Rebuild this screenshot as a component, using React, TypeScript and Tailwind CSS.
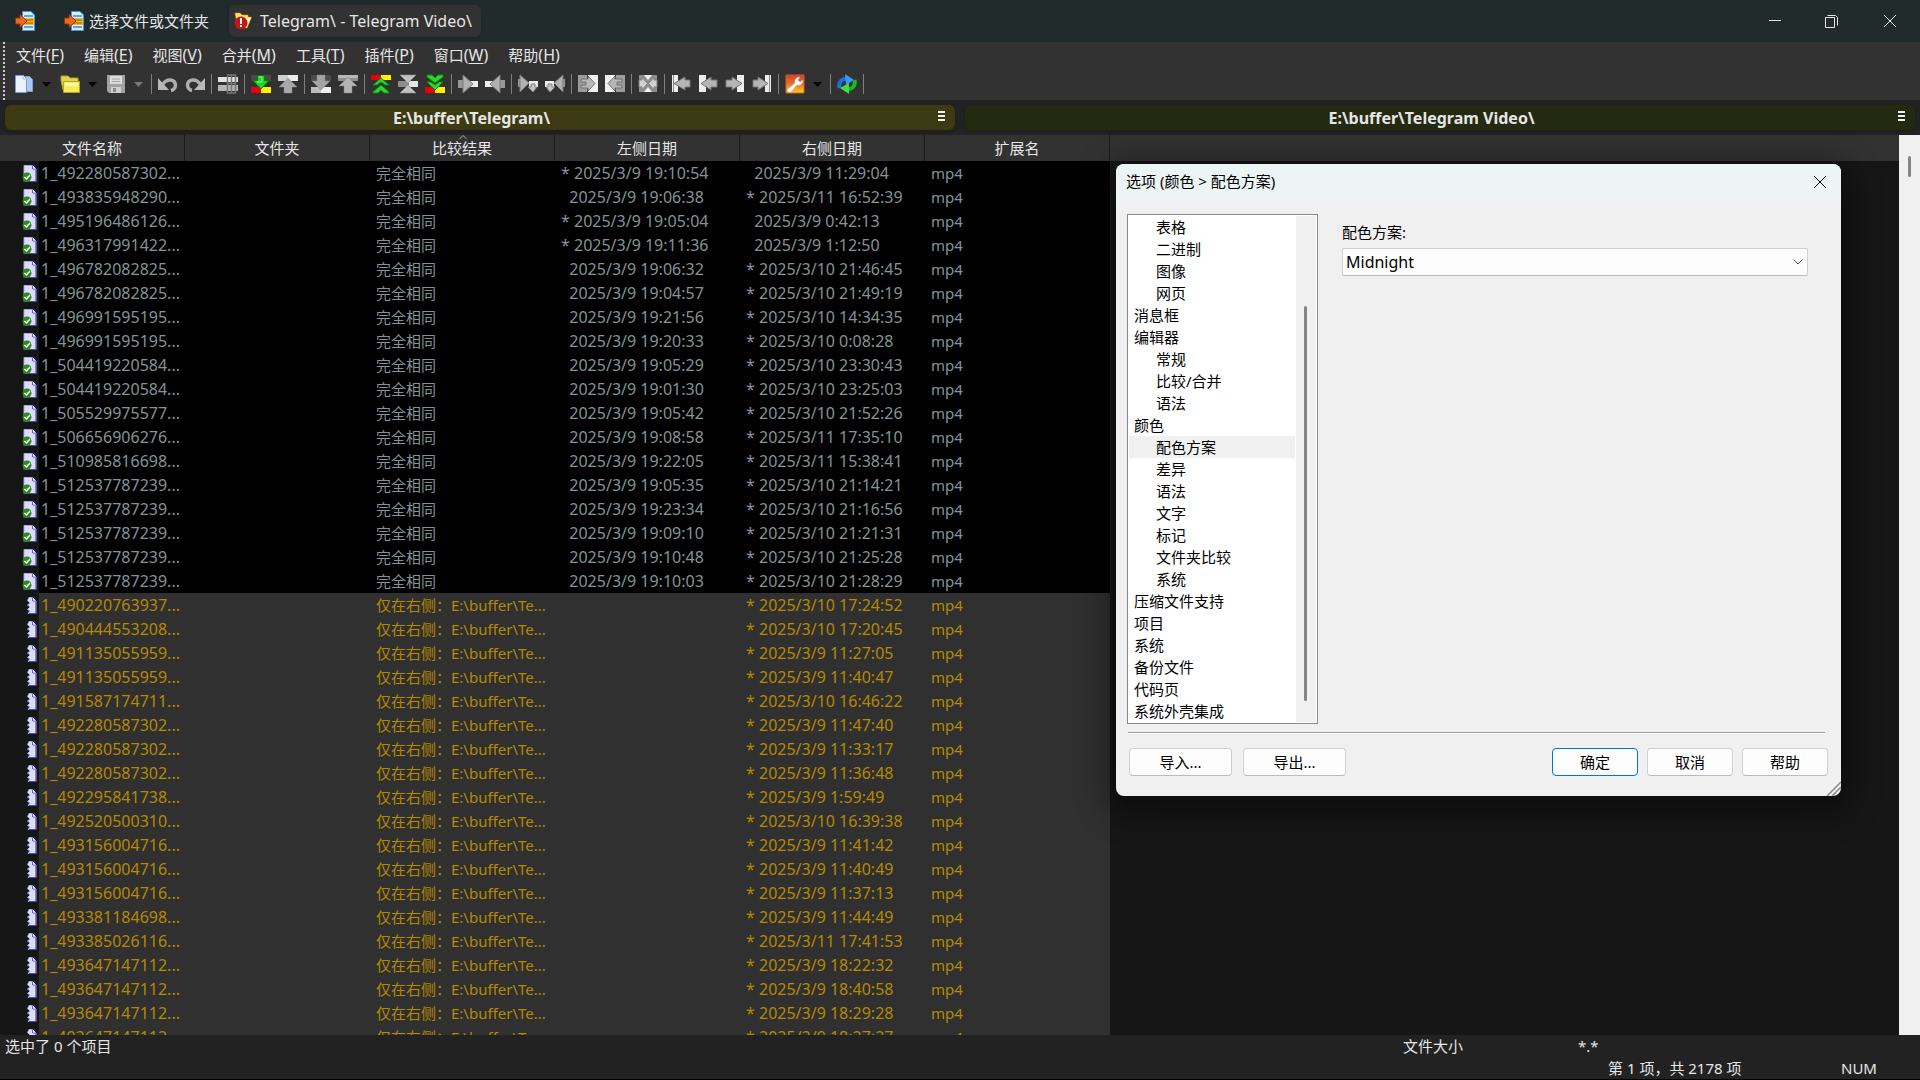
import type { ReactNode } from "react";

type IconName =
  | "new" | "open" | "save" | "undo" | "redo" | "panes"
  | "nextDiff" | "prevDiff" | "nextConflict" | "prevConflict"
  | "firstDiff" | "currentDiff" | "lastDiff"
  | "copyRight" | "copyLeft" | "copyRightNext" | "copyLeftNext"
  | "allRight" | "allLeft" | "autoMerge"
  | "firstFile" | "prevFile" | "nextFile" | "lastFile"
  | "options" | "refresh";

type Tool = IconName | "|";

interface Row {
  name: string;
  left?: string;
  right: string;
}

const TOOLS: Tool[] = [
  "new", "open", "save", "|",
  "undo", "redo", "|",
  "panes", "|",
  "nextDiff", "prevDiff", "|",
  "nextConflict", "prevConflict", "|",
  "firstDiff", "currentDiff", "lastDiff", "|",
  "copyRight", "copyLeft", "|",
  "copyRightNext", "copyLeftNext", "|",
  "allRight", "allLeft", "|",
  "autoMerge", "|",
  "firstFile", "prevFile", "nextFile", "lastFile", "|",
  "options", "|",
  "refresh", "|",
];

const DROPDOWNS: Tool[] = ["new", "open", "save", "options"];

const MENUS = [
  ["文件", "F"],
  ["编辑", "E"],
  ["视图", "V"],
  ["合并", "M"],
  ["工具", "T"],
  ["插件", "P"],
  ["窗口", "W"],
  ["帮助", "H"],
];

const COLUMNS = ["文件名称", "文件夹", "比较结果", "左侧日期", "右侧日期", "扩展名"];

const SAME: Row[] = [
  { name: "492280587302", left: "* 2025/3/9 19:10:54", right: "  2025/3/9 11:29:04" },
  { name: "493835948290", left: "  2025/3/9 19:06:38", right: "* 2025/3/11 16:52:39" },
  { name: "495196486126", left: "* 2025/3/9 19:05:04", right: "  2025/3/9 0:42:13" },
  { name: "496317991422", left: "* 2025/3/9 19:11:36", right: "  2025/3/9 1:12:50" },
  { name: "496782082825", left: "  2025/3/9 19:06:32", right: "* 2025/3/10 21:46:45" },
  { name: "496782082825", left: "  2025/3/9 19:04:57", right: "* 2025/3/10 21:49:19" },
  { name: "496991595195", left: "  2025/3/9 19:21:56", right: "* 2025/3/10 14:34:35" },
  { name: "496991595195", left: "  2025/3/9 19:20:33", right: "* 2025/3/10 0:08:28" },
  { name: "504419220584", left: "  2025/3/9 19:05:29", right: "* 2025/3/10 23:30:43" },
  { name: "504419220584", left: "  2025/3/9 19:01:30", right: "* 2025/3/10 23:25:03" },
  { name: "505529975577", left: "  2025/3/9 19:05:42", right: "* 2025/3/10 21:52:26" },
  { name: "506656906276", left: "  2025/3/9 19:08:58", right: "* 2025/3/11 17:35:10" },
  { name: "510985816698", left: "  2025/3/9 19:22:05", right: "* 2025/3/11 15:38:41" },
  { name: "512537787239", left: "  2025/3/9 19:05:35", right: "* 2025/3/10 21:14:21" },
  { name: "512537787239", left: "  2025/3/9 19:23:34", right: "* 2025/3/10 21:16:56" },
  { name: "512537787239", left: "  2025/3/9 19:09:10", right: "* 2025/3/10 21:21:31" },
  { name: "512537787239", left: "  2025/3/9 19:10:48", right: "* 2025/3/10 21:25:28" },
  { name: "512537787239", left: "  2025/3/9 19:10:03", right: "* 2025/3/10 21:28:29" },
];

const RIGHT_ONLY: Row[] = [
  { name: "490220763937", right: "* 2025/3/10 17:24:52" },
  { name: "490444553208", right: "* 2025/3/10 17:20:45" },
  { name: "491135055959", right: "* 2025/3/9 11:27:05" },
  { name: "491135055959", right: "* 2025/3/9 11:40:47" },
  { name: "491587174711", right: "* 2025/3/10 16:46:22" },
  { name: "492280587302", right: "* 2025/3/9 11:47:40" },
  { name: "492280587302", right: "* 2025/3/9 11:33:17" },
  { name: "492280587302", right: "* 2025/3/9 11:36:48" },
  { name: "492295841738", right: "* 2025/3/9 1:59:49" },
  { name: "492520500310", right: "* 2025/3/10 16:39:38" },
  { name: "493156004716", right: "* 2025/3/9 11:41:42" },
  { name: "493156004716", right: "* 2025/3/9 11:40:49" },
  { name: "493156004716", right: "* 2025/3/9 11:37:13" },
  { name: "493381184698", right: "* 2025/3/9 11:44:49" },
  { name: "493385026116", right: "* 2025/3/11 17:41:53" },
  { name: "493647147112", right: "* 2025/3/9 18:22:32" },
  { name: "493647147112", right: "* 2025/3/9 18:40:58" },
  { name: "493647147112", right: "* 2025/3/9 18:29:28" },
  { name: "493647147112", right: "* 2025/3/9 18:27:27" },
];

// leading ">" marks a child entry
const CATEGORIES = [
  ">表格", ">二进制", ">图像", ">网页", "消息框", "编辑器", ">常规", ">比较/合并",
  ">语法", "颜色", ">配色方案", ">差异", ">语法", ">文字", ">标记", ">文件夹比较",
  ">系统", "压缩文件支持", "项目", "系统", "备份文件", "代码页", "系统外壳集成",
];

const ICONS: Record<IconName, ReactNode> = {
  new: (
    <>
      <path d="M8.500 2.500 H15.500 L18.500 5.500 V17.500 H8.500 Z" fill="#a9c8f2" stroke="#7d9fd6" />
      <path d="M1.500 1.500 H9.500 L12.500 4.500 V18.500 H1.500 Z" fill="#e9f3ff" stroke="#7a9ad2" />
      <path d="M9 1.500 V5 H12.500" fill="#fff" stroke="#9db8e4" />
    </>
  ),
  open: (
    <>
      <path d="M1 2 H8 L10 4 H18 V16 H3 L1 6 Z" fill="#dfd35a" stroke="#b3a417" />
      <path d="M3.500 7.500 H19.500 V18.500 H3.500 Z" fill="#f4ec58" stroke="#b5a614" />
      <path d="M5 9 H18 V12 H5 Z" fill="#fbf8a6" />
    </>
  ),
  save: (
    <>
      <path d="M1 1 H19 V19 H3 L1 17 Z" fill="#a2a2a2" />
      <path d="M4 2 H16 V10 H4 Z" fill="#dcdcdc" />
      <path d="M6 5 H14 M6 7.500 H14" stroke="#a8a8a8" />
      <path d="M5 13 H15 V19 H5 Z" fill="#cfcfcf" />
      <path d="M7 14 H10 V18 H7 Z" fill="#888" />
    </>
  ),
  undo: (
    <>
      <path d="M5 10 C9 4 17 5 17.500 11 C17.500 14 15 16 13 16.500" fill="none" stroke="#adadad" strokeWidth="3.500" />
      <path d="M0 4 V16 H11 Z" fill="#b9b9b9" />
    </>
  ),
  redo: (
    <>
      <path d="M15 10 C11 4 3 5 2.500 11 C2.500 14 5 16 7 16.500" fill="none" stroke="#adadad" strokeWidth="3.500" />
      <path d="M20 4 V16 H9 Z" fill="#b9b9b9" />
    </>
  ),
  panes: (
    <>
      <path d="M0 3 H20 V8 H0 Z" fill="#e2e2e2" />
      <path d="M0 11 H20 V17 H0 Z" fill="#b5b5b5" />
      <path d="M9.500 1 H17.500 V19 H9.500 Z M13.500 1 V19 M9 9.500 H18" fill="none" stroke="#777" strokeWidth="1.500" />
    </>
  ),
  nextDiff: (
    <>
      <path d="M0 1 H20 V7 H0 Z" fill="#494949" />
      <path d="M0 13 H10 V19 H0 Z" fill="#e8000d" />
      <path d="M10 13 H20 V19 H10 Z" fill="#fff200" />
      <path d="M6.500 1.500 H13.500 V6.500 H18 L10 15 L2 6.500 H6.500 Z" fill="#22d422" stroke="#0b7d12" />
      <path d="M8 3 H11 V8 H6" fill="none" stroke="#86f486" />
    </>
  ),
  prevDiff: (
    <>
      <path d="M0 1 H10 V7 H0 Z" fill="#cfcfcf" />
      <path d="M10 1 H20 V7 H10 Z" fill="#ececec" />
      <path d="M10 4 L19 13 H14 V19 H6 V13 H1 Z" fill="#a9a9a9" stroke="#888" strokeWidth="0.500" />
    </>
  ),
  nextConflict: (
    <>
      <path d="M0 1 H20 V7 H0 Z" fill="#4d4d4d" />
      <path d="M0 13 H20 V19 H0 Z" fill="#bdbdbd" />
      <path d="M10 13 H20 V19 H10 Z" fill="#f0f0f0" />
      <path d="M6 1 H14 V7 H19 L10 16 L1 7 H6 Z" fill="#a4a4a4" stroke="#858585" strokeWidth="0.500" />
    </>
  ),
  prevConflict: (
    <>
      <path d="M0 1 H20 V7 H0 Z" fill="#8e8e8e" />
      <path d="M0 1 H20 V4 H0 Z" fill="#b9b9b9" />
      <path d="M10 3 L19 12 H14 V19 H6 V12 H1 Z" fill="#b4b4b4" stroke="#808080" strokeWidth="0.500" />
    </>
  ),
  firstDiff: (
    <>
      <path d="M0 1 H10 V6 H0 Z" fill="#e8000d" />
      <path d="M10 1 H20 V6 H10 Z" fill="#fff200" />
      <path d="M10 4 L18 11 H14 L10 8 L6 11 H2 Z M10 11 L18 18 V19 H13 L10 16 L7 19 H2 V18 Z" fill="#2bd82b" stroke="#0b8a12" />
    </>
  ),
  currentDiff: (
    <>
      <path d="M0 7 H20 V13 H0 Z" fill="#8d8d8d" />
      <path d="M11 7 H20 V13 H11 Z" fill="#e6e6e6" />
      <path d="M2 1 H18 L10 9 Z M10 11 L18 19 H2 Z" fill="#c2c2c2" stroke="#8a8a8a" strokeWidth="0.500" />
    </>
  ),
  lastDiff: (
    <>
      <path d="M0 13 H10 V19 H0 Z" fill="#e8000d" />
      <path d="M10 13 H20 V19 H10 Z" fill="#fff200" />
      <path d="M2 1 H7 L10 4 L13 1 H18 V3 L10 9 L2 3 Z M2 8 H6 L10 11 L14 8 H18 L10 16 Z" fill="#2bd82b" stroke="#0b8a12" />
    </>
  ),
  copyRight: (
    <>
      <path d="M0 6 H8 V14 H0 Z" fill="#989898" />
      <path d="M11 7 H20 V13 H11 Z" fill="#ededed" />
      <path d="M5 1 L15 10 L5 19 Z" fill="#b0b0b0" stroke="#7b7b7b" />
    </>
  ),
  copyLeft: (
    <>
      <path d="M12 6 H20 V14 H12 Z" fill="#989898" />
      <path d="M0 7 H9 V13 H0 Z" fill="#ededed" />
      <path d="M15 1 L5 10 L15 19 Z" fill="#b0b0b0" stroke="#7b7b7b" />
    </>
  ),
  copyRightNext: (
    <>
      <path d="M0 5 H5 V13 H0 Z" fill="#989898" />
      <path d="M11 7 H20 V13 H11 Z" fill="#ededed" />
      <path d="M2 1 L11 9 L2 18 Z" fill="#b0b0b0" stroke="#7b7b7b" />
      <path d="M13 10 H17 V13 H19 L15 18 L10 13 H13 Z" fill="#c4c4c4" stroke="#848484" />
    </>
  ),
  copyLeftNext: (
    <>
      <path d="M15 5 H20 V13 H15 Z" fill="#989898" />
      <path d="M0 7 H9 V13 H0 Z" fill="#ededed" />
      <path d="M18 1 L9 9 L18 18 Z" fill="#b0b0b0" stroke="#7b7b7b" />
      <path d="M3 10 H7 V13 H10 L5 18 L1 13 H3 Z" fill="#c4c4c4" stroke="#848484" />
    </>
  ),
  allRight: (
    <>
      <path d="M0 1 H9 V18 H0 Z" fill="#9c9c9c" />
      <path d="M10 1 H20 V18 H10 Z" fill="#f0f0f0" />
      <path d="M3 5 H10 V2 L17 9.500 L10 17 V14 H3 V11 H8 V8 H3 Z" fill="#b7b7b7" stroke="#707070" />
    </>
  ),
  allLeft: (
    <>
      <path d="M11 1 H20 V18 H11 Z" fill="#9c9c9c" />
      <path d="M0 1 H10 V18 H0 Z" fill="#f0f0f0" />
      <path d="M17 5 H10 V2 L3 9.500 L10 17 V14 H17 V11 H12 V8 H17 Z" fill="#b7b7b7" stroke="#707070" />
    </>
  ),
  autoMerge: (
    <>
      <path d="M1 1 H19 V18 H1 Z" fill="#8f8f8f" />
      <path d="M6 1 H14 L10 6 Z M6 18 H14 L10 13 Z" fill="#f4f4f4" />
      <path d="M1 6 H4 V3 L9.500 9.500 L4 16 V13 H1 Z M19 6 H16 V3 L10.500 9.500 L16 16 V13 H19 Z" fill="#d0d0d0" stroke="#808080" />
    </>
  ),
  firstFile: (
    <>
      <path d="M1 1 H7 V18 H1 Z" fill="#ededed" />
      <path d="M19 6 H14 V3 L3 9.500 L14 16 V13 H19 Z" fill="#b5b5b5" stroke="#757575" />
      <path d="M2.500 1 V18" stroke="#888" />
    </>
  ),
  prevFile: (
    <>
      <path d="M1 1 H8 V18 H1 Z" fill="#ededed" />
      <path d="M19 6 H13 V3 L3 9.500 L13 16 V13 H19 Z" fill="#b5b5b5" stroke="#757575" />
    </>
  ),
  nextFile: (
    <>
      <path d="M12 1 H19 V18 H12 Z" fill="#ededed" />
      <path d="M1 6 H7 V3 L17 9.500 L7 16 V13 H1 Z" fill="#b5b5b5" stroke="#757575" />
    </>
  ),
  lastFile: (
    <>
      <path d="M13 1 H19 V18 H13 Z" fill="#ededed" />
      <path d="M1 6 H6 V3 L16 9.500 L6 16 V13 H1 Z" fill="#b5b5b5" stroke="#757575" />
      <path d="M17.500 1 V18" stroke="#888" />
    </>
  ),
  options: (
    <>
      <defs>
        <linearGradient id="options-bg" x1="0" y1="0" x2="0" y2="1">
          <stop offset="0" stopColor="#d43a2c" />
          <stop offset="0.550" stopColor="#ee7a22" />
          <stop offset="1" stopColor="#ffd21f" />
        </linearGradient>
      </defs>
      <path d="M1 1 H19 V19 H1 Z" fill="url(#options-bg)" stroke="#c8632b" />
      <path d="M3 15 L10 9 C9 6 11 3 15 3 L13 6 L15 8 L18 6 C18 10 15 12 12 11 L6 18 C4 19 1 17 3 15 Z" fill="#fff" stroke="#b9aaa5" strokeWidth="0.500" />
    </>
  ),
  refresh: (
    <>
      <path d="M2.500 14 C1 8 5 4 11 5" fill="none" stroke="#1c6fe0" strokeWidth="4" />
      <path d="M8 0 L17 6 L9 11 Z" fill="#3f97f5" />
      <path d="M17.500 6 C19 12 15 16 9 15" fill="none" stroke="#1cb52c" strokeWidth="4" />
      <path d="M12 9 L3 14 L12 20 Z" fill="#45dc3f" />
    </>
  ),
};

function ToolIcon({ name }: { name: IconName }) {
  return (
    <svg viewBox="0 0 20 20" className="h-5 w-5">
      {ICONS[name]}
    </svg>
  );
}

function Caret({ dim }: { dim?: boolean }) {
  return (
    <svg viewBox="0 0 9 5" className="h-[5px] w-[9px]">
      <path d="M0 0 H9 L4.500 5 Z" fill={dim ? "#777" : "#000"} />
    </svg>
  );
}

function SelectDocIcon() {
  return (
    <svg viewBox="0 0 20 20" className="h-5 w-5 shrink-0">
      <path d="M7.500 0.500 H16 L19.500 4 V19.500 H7.500 Z" fill="#d8ecff" stroke="#4b93dd" />
      <path d="M9 5 H18 M9 16 H18" stroke="#3d86d4" strokeWidth="1.500" />
      <path d="M8 7 H19 V14 H8 Z" fill="#f5b81c" />
      <path d="M9 9 H18 M9 12 H18" stroke="#8a5a00" />
      <path d="M0.500 7 H5 V3.500 L12 10 L5 16.500 V13 H0.500 Z" fill="#ea6a1c" stroke="#8e3208" />
    </svg>
  );
}

function AlertFolderIcon() {
  return (
    <svg viewBox="0 0 18 18" className="h-[18px] w-[18px]">
      <path d="M1 1 H6 L8 3 H14 V5 H17.500 L13 16 H4 Z" fill="#f6e06a" stroke="#caa92a" strokeWidth="0.500" />
      <path d="M12 6 H17 L13 15 Z" fill="#fdf6c0" />
      <circle cx="7" cy="11" r="6.500" fill="#c3161c" />
      <path d="M6 6 H8 V12 H6 Z M6 13 H8 V15 H6 Z" fill="#fff" />
    </svg>
  );
}

function SameIcon() {
  return (
    <svg viewBox="0 0 15 17" className="h-[17px] w-[15px]">
      <path d="M2 0.500 H10.500 L14 4 V16.500 H2 Z" fill="#dcdcff" stroke="#a3a3f0" />
      <path d="M14 4 V16.500 H2" fill="none" stroke="#4b4ba8" />
      <path d="M10.500 0.500 V4 H14" fill="#fff" stroke="#5c5cff" />
      <circle cx="5" cy="12" r="4.500" fill="#2b8a12" />
      <path d="M2.500 12 L4.500 14 L8 10" fill="none" stroke="#fff" strokeWidth="1.500" />
    </svg>
  );
}

function RightOnlyIcon() {
  return (
    <svg viewBox="0 0 15 17" className="h-[17px] w-[15px]">
      <path d="M7 0.500 H10.500 L14 4 V16.500 H6 L8 14 L5.500 12.500 L8 10 L5.500 8 L8 6 L5.500 3.500 Z" fill="#dcdcff" stroke="#a3a3f0" />
      <path d="M14 4 V16.500 H7" fill="none" stroke="#4b4ba8" />
      <path d="M10.500 0.500 V4 H14" fill="#fff" stroke="#5c5cff" />
    </svg>
  );
}

function TitleBar() {
  return (
    <header className="flex h-[42px] shrink-0 items-center bg-[#222b2b] pl-[15px] text-[#e6e6e6]">
      <SelectDocIcon />
      <button className="ml-[29px] flex items-center gap-[5px]">
        <SelectDocIcon />
        选择文件或文件夹
      </button>
      <button className="ml-5 flex h-8 items-center gap-2 rounded-md bg-[#323232] pr-[9px] pl-[5px] shadow">
        <AlertFolderIcon />
        <span className="text-base">Telegram\ - Telegram Video\</span>
      </button>
      <div className="ml-auto flex h-full">
        <button aria-label="最小化" className="flex w-[57px] items-center justify-center">
          <svg viewBox="0 0 12 12" className="h-3 w-3" stroke="#e6e6e6" fill="none">
            <path d="M0 5.500 H12" />
          </svg>
        </button>
        <button aria-label="还原" className="flex w-[57px] items-center justify-center">
          <svg viewBox="0 0 13 13" className="h-[13px] w-[13px]" stroke="#e6e6e6" fill="none">
            <path d="M0.500 2.500 H9.500 V12.500 H0.500 Z M2.500 0.500 H10.500 L12.500 2.500 V10.500" />
          </svg>
        </button>
        <button aria-label="关闭" className="flex w-[60px] items-center justify-center">
          <svg viewBox="0 0 12 12" className="h-3 w-3" stroke="#e6e6e6" fill="none">
            <path d="M0 0 L12 12 M12 0 L0 12" />
          </svg>
        </button>
      </div>
    </header>
  );
}

function MenuAndTools() {
  return (
    <div className="flex h-[58px] shrink-0 bg-[#323232] pl-[3px] text-[#e6e6e6]">
      <div className="border-l-2 border-dotted border-[#d0d0d0]" />
      <div className="pl-[5px]">
        <nav className="flex h-[27px] items-center gap-5 pl-[6px]">
          {MENUS.map(([label, key]) => (
            <button key={key}>
              {label}
              <span className="text-base leading-5">
                (<u className="underline-offset-2">{key}</u>)
              </span>
            </button>
          ))}
        </nav>
        <div className="flex h-[30px] items-center">
          {TOOLS.map((t, i) =>
            t === "|" ? (
              <div key={i} className="flex w-[6px] justify-center">
                <div className="h-5 w-px bg-[#808080]" />
              </div>
            ) : (
              <div key={i} className="flex">
                <button aria-label={t} className="flex w-[27px] justify-center">
                  <ToolIcon name={t} />
                </button>
                {DROPDOWNS.includes(t) && (
                  <button aria-label={`${t} menu`} className="flex w-[19px] items-center justify-center">
                    <Caret dim={t === "save"} />
                  </button>
                )}
              </div>
            ),
          )}
        </div>
      </div>
    </div>
  );
}

function PathBar({ path, active }: { path: string; active?: boolean }) {
  return (
    <div
      className={`flex h-[25px] flex-1 items-center rounded-md pr-[10px] text-base font-bold text-[#e6e6e6] shadow ${
        active ? "bg-[#3c3a12]" : "bg-[#242a12]"
      }`}
    >
      <span className="flex-1 text-center leading-6">{path}</span>
      <button aria-label="菜单" className="flex flex-col gap-0.5 pb-1">
        <span className="h-0.5 w-[7px] bg-[#f0f0f0]" />
        <span className="h-0.5 w-[7px] bg-[#f0f0f0]" />
        <span className="h-0.5 w-[7px] bg-[#f0f0f0]" />
      </button>
    </div>
  );
}

function FileRow({ row }: { row: Row }) {
  const same = row.left !== undefined;
  const bg = same ? "bg-black" : "bg-[#303030]";
  return (
    <tr className={`h-6 ${same ? "text-[#839496]" : "text-[#b58900]"}`}>
      <td className="p-0">
        <div className="flex h-6 items-center">
          <div className="flex h-full w-[39px] shrink-0 items-center justify-end pr-[2px]">
            {same ? <SameIcon /> : <RightOnlyIcon />}
          </div>
          <span className={`h-full flex-1 pl-[2px] text-base leading-6 ${bg}`}>1_{row.name}...</span>
        </div>
      </td>
      <td className={bg} />
      <td className={`p-0 pl-[6px] ${bg}`}>{same ? "完全相同" : "仅在右侧：E:\\buffer\\Te..."}</td>
      <td className={`p-0 pl-[6px] text-base leading-6 ${bg}`}>{row.left}</td>
      <td className={`p-0 pl-[6px] text-base leading-6 ${bg}`}>{row.right}</td>
      <td className={`p-0 pl-[6px] ${bg}`}>mp4</td>
      <td />
    </tr>
  );
}

function FileTable() {
  return (
    <div className="min-w-0 flex-1 overflow-hidden bg-[#161616]">
      <table className="w-full table-fixed border-separate border-spacing-0 leading-6 whitespace-pre">
        <thead>
          <tr className="h-[26px] bg-[#323232] text-[#e6e6e6]">
            {COLUMNS.map((c) => (
              <th key={c} className="relative w-[185px] border-r border-[#1c1c1c] p-0 font-normal">
                {c === "比较结果" && (
                  <svg viewBox="0 0 8 4" className="absolute top-0 left-[89px] h-1 w-2" fill="none" stroke="#b0b0b0">
                    <path d="M0.500 4 L4 0.500 L7.500 4" />
                  </svg>
                )}
                {c}
              </th>
            ))}
            <th />
          </tr>
        </thead>
        <tbody>
          {SAME.map((r, i) => (
            <FileRow key={i} row={r} />
          ))}
          {RIGHT_ONLY.map((r, i) => (
            <FileRow key={i} row={r} />
          ))}
        </tbody>
      </table>
    </div>
  );
}

function StatusBar() {
  return (
    <footer className="h-[45px] shrink-0 border-b border-black bg-[#222] leading-[22px] text-[#e6e6e6]">
      <div className="flex">
        <span className="flex-1 pl-[5px]">选中了 0 个项目</span>
        <span className="w-[175px]">文件大小</span>
        <span className="w-[342px]">*.*</span>
      </div>
      <div className="flex justify-end">
        <span className="w-[233px]">第 1 项，共 2178 项</span>
        <span className="w-[79px]">NUM</span>
      </div>
    </footer>
  );
}

function DialogButton({ children, wide, primary }: { children: ReactNode; wide?: boolean; primary?: boolean }) {
  return (
    <button
      className={`h-7 rounded border bg-[#fdfdfd] ${wide ? "w-[103px]" : "w-[86px]"} ${
        primary ? "border-[#0078d4]" : "border-[#d0d0d0] border-b-[#bbb]"
      }`}
    >
      {children}
    </button>
  );
}

function OptionsDialog() {
  return (
    <div
      role="dialog"
      aria-label="选项"
      className="absolute top-[164px] right-[79px] w-[725px] overflow-hidden rounded-lg bg-[#f0f0f0] text-black shadow-[0_8px_32px_8px_rgba(0,0,0,0.45)]"
    >
      <div className="flex h-[37px] items-center justify-between bg-[#ecf5f3] pr-[14px] pb-0.5 pl-[10px]">
        <h1>选项 (颜色 &gt; 配色方案)</h1>
        <button aria-label="关闭" className="p-px">
          <svg viewBox="0 0 12 12" className="h-3 w-3" stroke="#000" fill="none">
            <path d="M0 0 L12 12 M12 0 L0 12" />
          </svg>
        </button>
      </div>
      <div className="flex gap-6 px-[11px] pt-[13px]">
        <div className="flex w-[191px] border border-[#828790] bg-white p-px">
          <ul className="flex-1 pr-px">
            {CATEGORIES.map((c, i) => {
              const child = c.startsWith(">");
              return (
                <li
                  key={i}
                  className={`h-[22px] leading-[22px] ${child ? "pl-[27px]" : "pl-[5px]"} ${
                    c === ">配色方案" ? "bg-[#f0f0f0]" : ""
                  }`}
                >
                  {child ? c.slice(1) : c}
                </li>
              );
            })}
          </ul>
          <div className="w-5 bg-[#f0f0f0] pt-[90px] pl-2">
            <div className="h-[395px] w-[3px] rounded-full bg-[#858585]" />
          </div>
        </div>
        <div className="flex-1 pt-[7px] pr-[22px]">
          <label htmlFor="scheme" className="block h-[27px] leading-[22px]">
            配色方案:
          </label>
          <div className="relative">
            <select
              id="scheme"
              defaultValue="Midnight"
              className="h-7 w-full appearance-none rounded-xs border border-[#d0d0d0] border-b-[#bbb] bg-[#fdfdfd] pl-[3px] text-base"
            >
              <option>Midnight</option>
            </select>
            <svg viewBox="0 0 10 6" className="pointer-events-none absolute top-[11px] right-[5px] h-[6px] w-[10px]" fill="none" stroke="#555">
              <path d="M0.500 0.500 L5 5 L9.500 0.500" />
            </svg>
          </div>
        </div>
      </div>
      <div className="mx-3 mt-2 mr-4 h-0.5 border-t border-[#a0a0a0] bg-white" />
      <div className="flex px-[13px] pt-[14px] pb-5">
        <div className="flex flex-1 gap-[11px]">
          <DialogButton wide>导入...</DialogButton>
          <DialogButton wide>导出...</DialogButton>
        </div>
        <div className="flex gap-[9px]">
          <DialogButton primary>确定</DialogButton>
          <DialogButton>取消</DialogButton>
          <DialogButton>帮助</DialogButton>
        </div>
      </div>
      <svg viewBox="0 0 15 15" className="absolute right-0 bottom-0 h-[15px] w-[15px]" stroke="#888">
        <path d="M1 15 L15 1 M6 15 L15 6 M11 15 L15 11" strokeWidth="1.500" />
      </svg>
    </div>
  );
}

export default function App() {
  return (
    <div className="relative flex h-screen flex-col overflow-hidden bg-[#222] font-['Noto_Sans','Noto_Sans_CJK_SC',sans-serif] text-[15px]">
      <TitleBar />
      <MenuAndTools />
      <div className="flex h-[35px] shrink-0 items-center gap-[10px] px-[5px]">
        <PathBar path="E:\buffer\Telegram\" active />
        <PathBar path="E:\buffer\Telegram Video\" />
      </div>
      <main className="flex min-h-0 flex-1">
        <FileTable />
        <div className="w-[21px] bg-[#f0f0f0] pt-[21px] pl-[9px]">
          <div className="h-[21px] w-[3px] rounded-full bg-[#858585]" />
        </div>
      </main>
      <StatusBar />
      <OptionsDialog />
    </div>
  );
}
